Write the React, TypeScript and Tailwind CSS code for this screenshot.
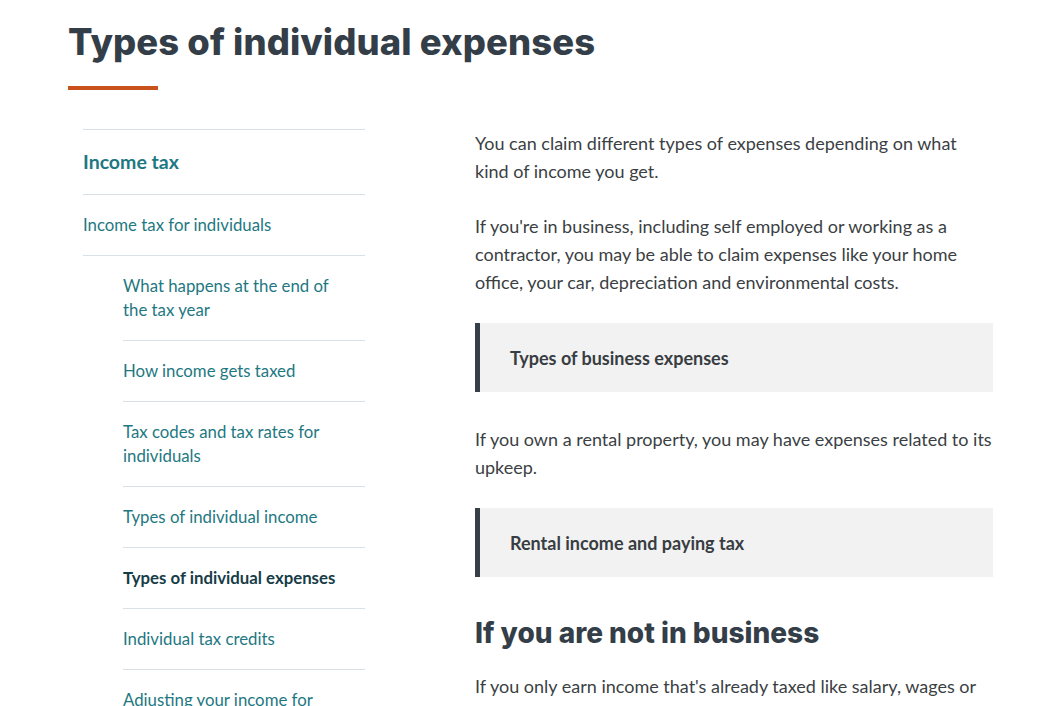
import React from 'react';

const body = "font-['Lato','Liberation_Sans',sans-serif]";
const display = "font-['Inter','Liberation_Sans',sans-serif]";

const subItems = [
  { label: 'What happens at the end of the tax year' },
  { label: 'How income gets taxed' },
  { label: 'Tax codes and tax rates for individuals' },
  { label: 'Types of individual income' },
  { label: 'Types of individual expenses', active: true },
  { label: 'Individual tax credits' },
  { label: 'Adjusting your income for tax purposes' },
];

function Callout({ title }: { title: string }) {
  return (
    <div className="flex h-[69px] items-center border-l-[5px] border-[#373f47] bg-[#f2f2f2] pl-[30px]">
      <span className="text-[18px] font-bold text-[#383d42]">{title}</span>
    </div>
  );
}

export default function App() {
  return (
    <div className={`h-screen overflow-hidden bg-white px-[68px] ${body}`}>
      <h1 className={`pt-[20px] text-[36.4px] font-extrabold leading-[44px] tracking-[0.1px] text-[#333e48] ${display}`}>
        Types of individual expenses
      </h1>
      <div className="mt-[22px] h-[4px] w-[90px] bg-[#c9511c]" />

      <div className="mt-[39px] flex">
        <nav className="ml-[15px] w-[282px] shrink-0">
          <ul>
            <li className="border-y border-[#d7e1e6] py-[18px] text-[19.5px] font-bold leading-[28px] text-[#1e7882]">
              Income tax
            </li>
            <li className="border-b border-[#d7e1e6] py-[18px] text-[16.8px] leading-[24px] text-[#1e7882]">
              Income tax for individuals
            </li>
          </ul>
          <ul className="ml-[40px]">
            {subItems.map((item) => (
              <li
                key={item.label}
                className={`border-b border-[#d7e1e6] py-[18px] pr-[28px] text-[16.8px] leading-[24px] ${
                  item.active ? 'font-bold text-[#163c47]' : 'text-[#1e7882]'
                }`}
              >
                {item.label}
              </li>
            ))}
          </ul>
        </nav>

        <main className="ml-[110px] w-[518px] text-[18px] leading-[28px] text-[#3b3f44]">
          <p>You can claim different types of expenses depending on what kind of income you get.</p>
          <p className="mt-[27px]">
            If you're in business, including self employed or working as a contractor, you may be able to
            claim expenses like your home office, your car, depreciation and environmental costs.
          </p>
          <div className="mt-[27px]">
            <Callout title="Types of business expenses" />
          </div>
          <p className="mt-[33px]">
            If you own a rental property, you may have expenses related to its upkeep.
          </p>
          <div className="mt-[27px]">
            <Callout title="Rental income and paying tax" />
          </div>
          <h2 className={`mt-[38px] text-[28px] font-extrabold leading-[36px] text-[#333e48] ${display}`}>
            If you are not in business
          </h2>
          <p className="mt-[21px]">
            If you only earn income that's already taxed like salary, wages or benefits, you usually can't
            claim expenses.
          </p>
        </main>
      </div>
    </div>
  );
}
